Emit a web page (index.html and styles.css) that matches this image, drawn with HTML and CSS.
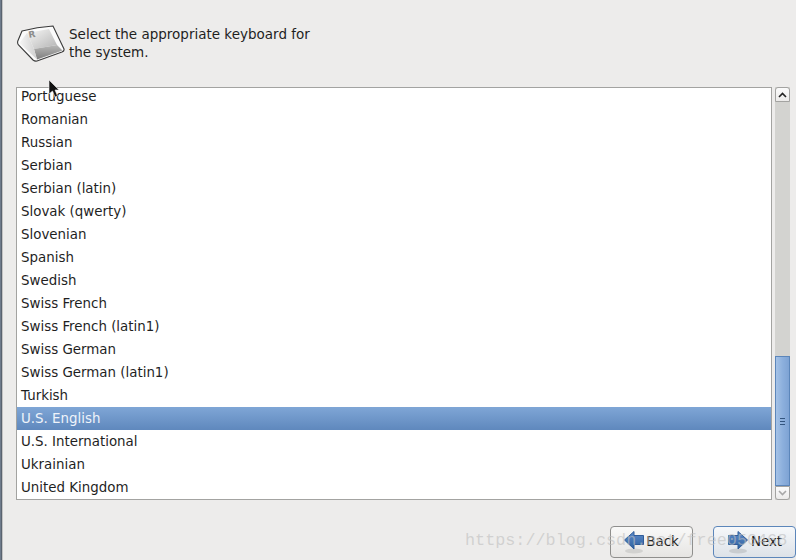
FILE: index.html
```html
<!DOCTYPE html>
<html lang="en">
<head>
<meta charset="utf-8">
<title>Keyboard</title>
<link rel="stylesheet" href="styles.css">
</head>
<body>
<div class="screen">
  <header class="head">
    <svg class="keycap" width="48" height="37" viewBox="0 0 48 37">
      <defs>
        <linearGradient id="kt" x1="0" y1="0" x2="1" y2="1"><stop offset="0" stop-color="#f8f8f7"/><stop offset="1" stop-color="#b4b4b4"/></linearGradient>
        <linearGradient id="kf" x1="0" y1="0" x2="0" y2="1"><stop offset="0" stop-color="#b8b8b7"/><stop offset="1" stop-color="#7e7e7e"/></linearGradient>
        <linearGradient id="kl" x1="0" y1="0" x2="1" y2="0"><stop offset="0" stop-color="#f5f5f5"/><stop offset="1" stop-color="#cfcfcf"/></linearGradient>
      </defs>
      <path d="M5 6 Q20 2 36 1 L47 24 Q47.500 26 45 27 L20 36 Q18 36.500 16 35 L1.500 20 Q0 18 1 15.500 Z" fill="#fbfbfb" stroke="#3a3a3a" stroke-width="1.100"/>
      <path d="M10 8 L32 4 L40 20 L17 24 Z" fill="url(#kt)"/>
      <path d="M17 24 L40 20 L45.500 25.500 L20 34.500 Z" fill="url(#kf)"/>
      <path d="M10 8 L17 24 L20 34.500 L2.500 18 Z" fill="url(#kl)"/>
      <text class="keycap-r" x="12" y="13" transform="rotate(-10 12 13)">R</text>
    </svg>
    <p class="prompt">Select the appropriate keyboard for the system.</p>
  </header>
  <div class="pane">
    <div class="list">
      <div class="row first">Portuguese</div>
      <div class="row">Romanian</div>
      <div class="row">Russian</div>
      <div class="row">Serbian</div>
      <div class="row">Serbian (latin)</div>
      <div class="row">Slovak (qwerty)</div>
      <div class="row">Slovenian</div>
      <div class="row">Spanish</div>
      <div class="row">Swedish</div>
      <div class="row">Swiss French</div>
      <div class="row">Swiss French (latin1)</div>
      <div class="row">Swiss German</div>
      <div class="row">Swiss German (latin1)</div>
      <div class="row">Turkish</div>
      <div class="row selected">U.S. English</div>
      <div class="row">U.S. International</div>
      <div class="row">Ukrainian</div>
      <div class="row">United Kingdom</div>
    </div>
    <div class="scrollbar">
      <div class="step step-up">
        <svg width="9" height="6" viewBox="0 0 9 6"><path d="M1 5 L4.500 1.500 L8 5" fill="none" stroke="#222" stroke-width="1.600"/></svg>
      </div>
      <div class="trough"></div>
      <div class="thumb">
        <span class="grip"></span><span class="grip"></span><span class="grip"></span>
      </div>
      <div class="step step-down">
        <svg width="9" height="6" viewBox="0 0 9 6"><path d="M1 1 L4.500 4.500 L8 1" fill="none" stroke="#a8a8a8" stroke-width="1.600"/></svg>
      </div>
    </div>
  </div>
  <footer class="actions">
    <button class="btn">
      <svg class="btn-icon" width="20" height="26" viewBox="0 0 20 26">
        <defs>
          <linearGradient id="ab" x1="0" y1="0" x2="0" y2="1"><stop offset="0" stop-color="#5d8ccb"/><stop offset="1" stop-color="#2f619f"/></linearGradient>
        </defs>
        <ellipse cx="10" cy="22" rx="9" ry="2.500" fill="#d2d2d0"/>
        <path d="M.5 11 L10 2.500 L10 6.500 L19.500 6.500 L19.500 15.500 L10 15.500 L10 20 Z" fill="url(#ab)" stroke="#2f5c99" stroke-width="1"/>
      </svg>
      <span class="btn-label">Back</span>
    </button>
    <button class="btn btn-default">
      <svg class="btn-icon" width="20" height="26" viewBox="0 0 20 26">
        <ellipse cx="10" cy="22" rx="9" ry="2.500" fill="#c8ccd0"/>
        <path d="M19.500 11 L10 2.500 L10 6.500 L.5 6.500 L.5 15.500 L10 15.500 L10 20 Z" fill="url(#ab)" stroke="#2f5c99" stroke-width="1"/>
      </svg>
      <span class="btn-label">Next</span>
    </button>
  </footer>
  <svg class="cursor" width="12" height="18" viewBox="0 0 12 18"><path d="M1 0 L1 14 L4.500 11 L7 17 L9.500 16 L7 10 L11 10 Z" fill="#111" stroke="#eee" stroke-width=".6"/></svg>
  <div class="edge"></div>
  <div class="watermark">https://blog.csdn.net/free050468</div>
</div>
</body>
</html>
```
FILE: styles.css
```css
* { box-sizing: border-box; }
html, body { margin: 0; padding: 0; }
body { width: 796px; height: 560px; overflow: hidden; background: #edeceb; }
.screen {
  position: relative;
  width: 796px;
  height: 560px;
  padding: 0 6px 0 16px;
  display: flex;
  flex-direction: column;
  font-family: "DejaVu Sans", sans-serif;
  font-size: 13.4px;
  color: #1f1f1f;
  background: #edeceb;
}
.head {
  height: 87px;
  padding: 25px 0 0 1px;
  display: flex;
  align-items: flex-start;
  gap: 4px;
}
.keycap { flex: none; }
.keycap-r { font-family: "DejaVu Sans", sans-serif; font-size: 9px; font-weight: 700; fill: #8c8c8c; }
.prompt { margin: 0; width: 250px; font-size: 13.5px; line-height: 18px; }
.pane { display: flex; height: 413px; gap: 3px; }
.list {
  flex: 1;
  height: 413px;
  overflow: hidden;
  border: 1px solid #a3a3a1;
  background: #fff;
}
.row { height: 23px; line-height: 23px; padding-left: 4px; white-space: nowrap; }
.row.first { margin-top: -3px; }
.row.selected {
  color: #eef3fa;
  background: linear-gradient(#7fa6d6, #5f88bd);
}
.scrollbar {
  position: relative;
  width: 15px;
  height: 413px;
  display: flex;
  flex-direction: column;
  background: #d3d3d0;
}
.step {
  flex: none;
  height: 15px;
  display: flex;
  align-items: center;
  justify-content: center;
  border: 1px solid #a3a3a1;
  background: linear-gradient(#fbfbfb, #ecebea);
}
.step-up { border-radius: 3px 3px 0 0; }
.step-down { height: 14px; border-radius: 0 0 3px 3px; }
.trough { flex: 1; }
.thumb {
  flex: none;
  height: 130px;
  display: flex;
  flex-direction: column;
  align-items: center;
  justify-content: center;
  gap: 2px;
  border: 1px solid #5c86ba;
  background: linear-gradient(90deg, #a5c2e6, #8db0dd 50%, #7ea3d4);
}
.grip { width: 5px; height: 1px; background: #33557f; }
.actions {
  flex: 1;
  margin-right: -6px;
  display: flex;
  justify-content: flex-end;
  align-items: flex-start;
  gap: 20px;
  padding: 26px 0 0;
}
.btn {
  width: 83px;
  height: 32px;
  padding: 0;
  display: flex;
  align-items: center;
  justify-content: center;
  gap: 2px;
  font: inherit;
  color: #1f1f1f;
  border: 1px solid #8f8f8d;
  border-radius: 4px;
  background: linear-gradient(#f9f9f8, #e6e5e3);
}
.btn-default { border-color: #5c86ba; background: linear-gradient(#f6f8fa, #dde2e8); }
.btn-icon { flex: none; }
.btn-label { margin: -2px 0 0; }
.btn-default .btn-label { margin-left: 1px; margin-right: -1px; }
.cursor { position: absolute; left: 48px; top: 80px; }
.edge {
  position: absolute;
  left: 0;
  top: 0;
  width: 3px;
  height: 560px;
  background: linear-gradient(90deg, #6f7c8c 0, #6f7c8c 1px, #5a6470 1px, #5a6470 2px, #c4c4c4 2px);
}
.watermark {
  position: absolute;
  left: 465px;
  top: 531px;
  font-family: "Liberation Mono", monospace;
  font-size: 16.8px;
  line-height: 20px;
  white-space: nowrap;
  color: rgba(190, 190, 190, .6);
}
```
